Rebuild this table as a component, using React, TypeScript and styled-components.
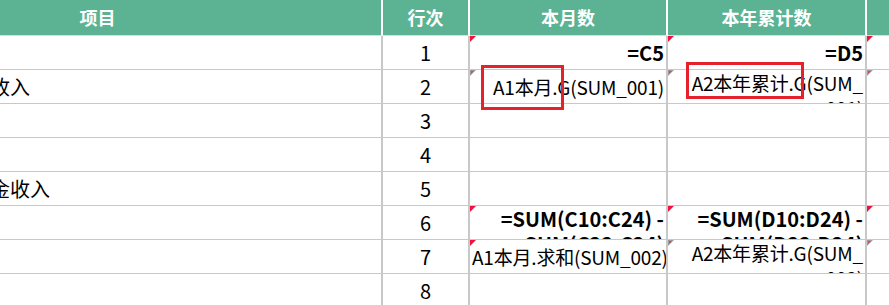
import React from 'react';
import styled, { createGlobalStyle, css } from 'styled-components';

const GlobalStyle = createGlobalStyle`
  html, body {
    margin: 0;
    padding: 0;
    background: #ffffff;
    overflow: hidden;
  }
  body {
    font-family: 'Noto Sans CJK SC', 'Noto Sans', sans-serif;
    color: #000000;
  }
`;

type Note = 'red' | 'gray' | undefined;

interface RowData {
  item?: string;
  indent?: number;
  no: number;
  month?: string[];
  year?: string[];
  bold?: boolean;
  notes?: [Note, Note, Note];
}

const rows: RowData[] = [
  { no: 1, month: ['=C5'], year: ['=D5'], bold: true, notes: ['red', 'red', 'red'] },
  {
    item: '其中：主营业务收入',
    indent: 36,
    no: 2,
    month: ['A1本月.G(SUM_001)'],
    year: ['A2本年累计.G(SUM_', '001)'],
    notes: ['gray', 'gray', 'gray'],
  },
  { no: 3 },
  { no: 4 },
  { item: '其中：补助资金收入', indent: 56, no: 5 },
  {
    no: 6,
    month: ['=SUM(C10:C24) -', 'SUM(C22:C24)'],
    year: ['=SUM(D10:D24) -', 'SUM(D22:D24)'],
    bold: true,
    notes: ['red', 'red', 'red'],
  },
  {
    no: 7,
    month: ['A1本月.求和(SUM_002)'],
    year: ['A2本年累计.G(SUM_', '002)'],
    notes: ['red', 'gray', 'gray'],
  },
  { no: 8 },
];

const Page = styled.div`
  position: relative;
  width: 889px;
  height: 305px;
  overflow: hidden;
`;

const Sheet = styled.div`
  display: grid;
  grid-template-columns: 569px 87px 198px 199px 200px;
  grid-template-rows: 36px;
  grid-auto-rows: 34px;
  margin-left: -186px;
  width: max-content;
`;

const HeaderCell = styled.div`
  box-sizing: border-box;
  background: #5cb394;
  border-right: 2px solid #ffffff;
  border-bottom: 1px solid #dcdcdc;
  display: flex;
  align-items: center;
  justify-content: center;
  color: #ffffff;
  font-size: 18px;
  font-weight: 700;
  padding-bottom: 2px;
`;

const noteMark = {
  red: css`
    &::before {
      content: '';
      position: absolute;
      top: 0;
      left: 0;
      border-top: 6px solid #f0123e;
      border-right: 6px solid transparent;
    }
  `,
  gray: css`
    &::before {
      content: '';
      position: absolute;
      top: 0;
      left: 0;
      border-top: 6px solid #9c9c9c;
      border-right: 6px solid transparent;
    }
    &::after {
      content: '';
      position: absolute;
      top: 1px;
      left: 1px;
      border-top: 3px solid #e8405e;
      border-right: 3px solid transparent;
    }
  `,
};

const Cell = styled.div<{
  $align?: 'left' | 'center' | 'right';
  $indent?: number;
  $bold?: boolean;
  $wrap?: boolean;
  $note?: Note;
}>`
  position: relative;
  box-sizing: border-box;
  border-right: 2px solid #c8c8c8;
  border-bottom: 1px solid #c8c8c8;
  overflow: hidden;
  display: flex;
  flex-direction: column;
  justify-content: ${({ $wrap }) => ($wrap ? 'flex-start' : 'center')};
  text-align: ${({ $align }) => $align || 'left'};
  padding: 0 2px 0 ${({ $indent }) => $indent ?? 2}px;
  font-size: ${({ $align, $bold }) => ($align === 'right' && !$bold ? 19 : 20)}px;
  letter-spacing: ${({ $align, $bold }) => ($align === 'right' && !$bold ? '-0.2px' : '0')};
  line-height: 25px;
  font-weight: ${({ $bold }) => ($bold ? 700 : 400)};
  white-space: nowrap;
  ${({ $note }) => ($note ? noteMark[$note] : '')}
`;

const Line = styled.span`
  display: block;
  flex-shrink: 0;
`;

const Marker = styled.div`
  position: absolute;
  box-sizing: border-box;
  border: 3px solid #e5222b;
`;

const ValueCell = ({ lines, bold, note }: { lines?: string[]; bold?: boolean; note: Note }) => (
  <Cell $align="right" $bold={bold} $wrap={!!lines && lines.length > 1} $note={note}>
    {lines?.map(line => (
      <Line key={line}>{line}</Line>
    ))}
  </Cell>
);

export default function App() {
  return (
    <>
      <GlobalStyle />
      <Page>
        <Sheet>
          <HeaderCell>项目</HeaderCell>
          <HeaderCell>行次</HeaderCell>
          <HeaderCell>本月数</HeaderCell>
          <HeaderCell>本年累计数</HeaderCell>
          <HeaderCell />
          {rows.map(row => (
            <React.Fragment key={row.no}>
              <Cell $indent={row.indent}>{row.item}</Cell>
              <Cell $align="center">{row.no}</Cell>
              <ValueCell lines={row.month} bold={row.bold} note={row.notes?.[0]} />
              <ValueCell lines={row.year} bold={row.bold} note={row.notes?.[1]} />
              <Cell $note={row.notes?.[2]} />
            </React.Fragment>
          ))}
        </Sheet>
        <Marker style={{ left: 481, top: 65, width: 83, height: 45 }} />
        <Marker style={{ left: 686, top: 62, width: 118, height: 37 }} />
      </Page>
    </>
  );
}
